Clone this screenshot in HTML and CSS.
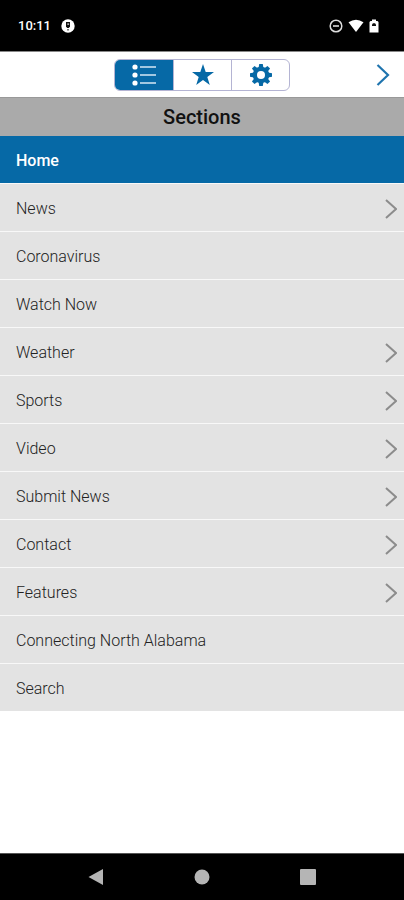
FILE: index.html
```html
<!DOCTYPE html>
<html lang="en">
<head>
<meta charset="utf-8">
<meta name="viewport" content="width=device-width, initial-scale=1">
<title>Sections</title>
<link rel="stylesheet" href="styles.css">
</head>
<body>
<div class="status">
  <span class="clock">10:11</span>
  <svg class="notice" width="14" height="14" viewBox="0 0 14 14" aria-hidden="true"><circle cx="7" cy="7" r="6.700" fill="#fff"/><path d="M5 3h4v4.500L7.800 9H6.200L5 7.500z" fill="#111"/><path d="M6.300 4.300h1.800v1.700H6.300z" fill="#aaa"/><path d="M6 10h2v1.500H6z" fill="#777"/></svg>
  <div class="indicators">
    <svg width="14" height="14" viewBox="0 0 14 14" aria-hidden="true"><circle cx="7" cy="7" r="5.800" fill="none" stroke="#ddd" stroke-width="1.500"/><path d="M4 7h6" stroke="#ddd" stroke-width="1.600"/></svg>
    <svg width="16" height="14" viewBox="0 0 16 14" aria-hidden="true"><path d="M.5 3.300Q8-2 15.500 3.300L8 13z" fill="#fff"/></svg>
    <svg width="10" height="14" viewBox="0 0 10 14" aria-hidden="true"><path d="M3 .5h4V2h1.500l1 1v10.500h-9V3l1-1H3z" fill="#fff"/><path d="M3 7V5.500L4 4.300h2l1 1.200V7z" fill="#111"/></svg>
  </div>
</div>
<header class="toolbar">
  <div class="tabs">
    <button class="tab tab-active" aria-label="Sections"><svg width="26" height="22" viewBox="0 0 26 22"><g fill="#fff"><circle cx="4" cy="3" r="2.600"/><circle cx="4" cy="11" r="2.600"/><circle cx="4" cy="19" r="2.600"/></g><path d="M9 3h16M9 11h16M9 19h16" stroke="#d5e8f5" stroke-width="1.500"/></svg></button>
    <button class="tab" aria-label="Favorites"><svg width="24" height="24" viewBox="0 0 24 24"><path d="M12 1l2.700 7.900H23l-6.700 5 2.500 8.100-6.800-4.900L5.200 22l2.500-8.100-6.700-5h8.300z" fill="#0669a6"/></svg></button>
    <button class="tab" aria-label="Settings"><svg width="24" height="24" viewBox="-12 -12 24 24"><g fill="#0669a6"><path id="tooth" d="M-2.400-7L-1.800-11H1.800L2.400-7V7L1.800 11H-1.800L-2.400 7z"/><use href="#tooth" transform="rotate(45)"/><use href="#tooth" transform="rotate(90)"/><use href="#tooth" transform="rotate(135)"/><circle r="8.300"/></g><circle r="4" fill="#fff"/></svg></button>
  </div>
  <button class="next" aria-label="Next"><svg width="14" height="24" viewBox="0 0 14 24"><path d="M1.500 2L12 12 1.500 22" fill="none" stroke="#1f74ae" stroke-width="2.200"/></svg></button>
</header>
<h1 class="title">Sections</h1>
<nav class="menu">
  <a class="item item-active" href="#">Home</a>
  <a class="item" href="#">News<svg class="arrow" viewBox="0 0 12 20"><path d="M1 1l10 9-10 9"/></svg></a>
  <a class="item" href="#">Coronavirus</a>
  <a class="item" href="#">Watch Now</a>
  <a class="item" href="#">Weather<svg class="arrow" viewBox="0 0 12 20"><path d="M1 1l10 9-10 9"/></svg></a>
  <a class="item" href="#">Sports<svg class="arrow" viewBox="0 0 12 20"><path d="M1 1l10 9-10 9"/></svg></a>
  <a class="item" href="#">Video<svg class="arrow" viewBox="0 0 12 20"><path d="M1 1l10 9-10 9"/></svg></a>
  <a class="item" href="#">Submit News<svg class="arrow" viewBox="0 0 12 20"><path d="M1 1l10 9-10 9"/></svg></a>
  <a class="item" href="#">Contact<svg class="arrow" viewBox="0 0 12 20"><path d="M1 1l10 9-10 9"/></svg></a>
  <a class="item" href="#">Features<svg class="arrow" viewBox="0 0 12 20"><path d="M1 1l10 9-10 9"/></svg></a>
  <a class="item" href="#">Connecting North Alabama</a>
  <a class="item" href="#">Search</a>
</nav>
<footer class="system">
  <button class="key" aria-label="Back"><svg width="16" height="18" viewBox="0 0 16 18"><path d="M.5 9L15 1v16z" fill="#b5b5b5"/></svg></button>
  <button class="key" aria-label="Home screen"><svg width="16" height="16" viewBox="0 0 16 16"><circle cx="8" cy="8" r="7.500" fill="#b5b5b5"/></svg></button>
  <button class="key" aria-label="Recent apps"><svg width="16" height="16" viewBox="0 0 16 16"><rect width="16" height="16" rx="1" fill="#b5b5b5"/></svg></button>
</footer>
</body>
</html>
```
FILE: styles.css
```css
* {
  box-sizing: border-box;
}

body {
  margin: 0;
  min-height: 100vh;
  display: flex;
  flex-direction: column;
  background: #fff;
  font-family: Roboto, "Liberation Sans", sans-serif;
  font-size: 16px;
  line-height: 24px;
}

button {
  display: flex;
  align-items: center;
  justify-content: center;
  margin: 0;
  padding: 0;
  border: 0;
  background: none;
}

svg {
  display: block;
  flex: none;
}

.status {
  display: flex;
  align-items: center;
  height: 52px;
  padding: 0 25px 0 18px;
  background: #000;
  border-bottom: 1px solid #888;
  color: #fff;
}

.clock {
  font-size: 13px;
  font-weight: 500;
  margin-right: 10px;
}

.indicators {
  display: flex;
  align-items: center;
  gap: 5px;
  margin-left: auto;
}

.toolbar {
  display: grid;
  grid-template-columns: 1fr auto 1fr;
  align-items: center;
  height: 45px;
  padding: 0 14px;
}

.tabs {
  grid-column: 2;
  display: flex;
  height: 32px;
  border: 1px solid #b4b4d3;
  border-radius: 6px;
  overflow: hidden;
}

.tab {
  width: 58px;
}

.tab + .tab {
  border-left: 1px solid #b4b4d3;
}

.tab-active {
  background: #0669a6;
}

.next {
  justify-self: end;
}

.title {
  margin: 0;
  padding: 8px 0 7px;
  background: #aaa;
  border-top: 1px solid #999;
  text-align: center;
  font-size: 20px;
  font-weight: 500;
  line-height: 23px;
  color: #111;
}

.menu {
  display: flex;
  flex-direction: column;
}

.item {
  display: flex;
  align-items: center;
  justify-content: space-between;
  height: 48px;
  padding: 2px 7px 0 16px;
  background: #e3e3e3;
  border-bottom: 1px solid #f8f8f8;
  color: #222;
  font-weight: 300;
  text-decoration: none;
}

.item:last-child {
  border-bottom-color: #fff;
}

.item-active {
  background: #0669a6;
  color: #fff;
  font-weight: 500;
}

.arrow {
  width: 12px;
  height: 20px;
  fill: none;
  stroke: #8c8c8c;
  stroke-width: 2;
}

.system {
  display: flex;
  align-items: center;
  justify-content: center;
  gap: 90px;
  height: 47px;
  margin-top: auto;
  background: #000;
  border-top: 1px solid #555;
}
```
